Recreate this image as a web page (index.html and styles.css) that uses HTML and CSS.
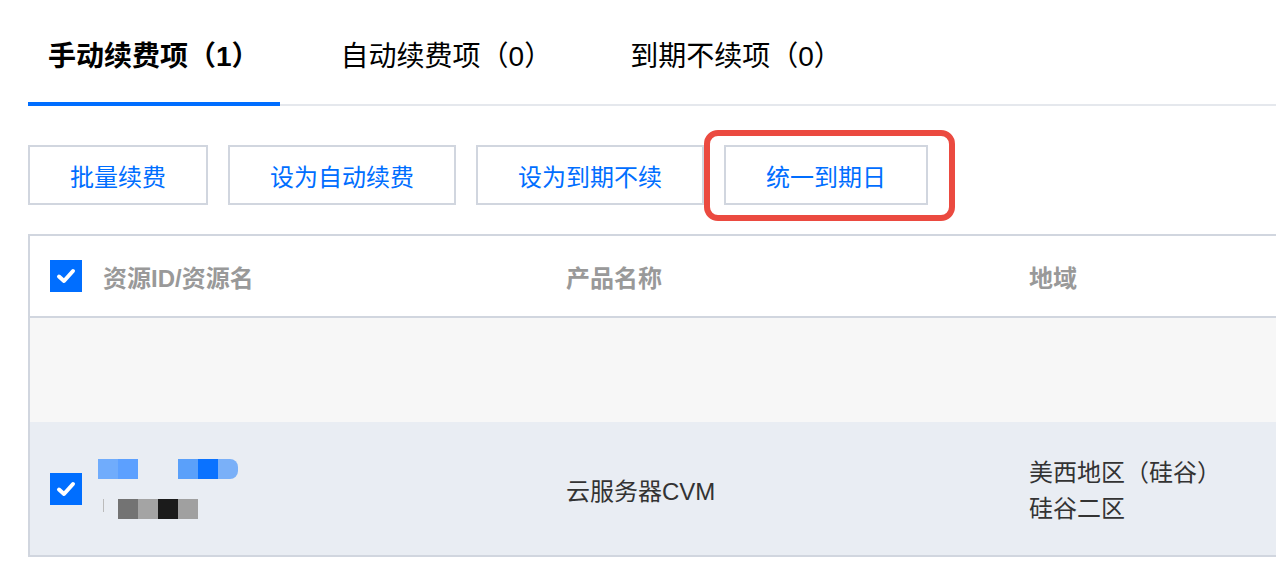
FILE: index.html
```html
<!DOCTYPE html>
<html lang="zh-CN">
<head>
<meta charset="utf-8">
<title>续费管理</title>
<link rel="stylesheet" href="styles.css">
</head>
<body>
<div class="page">
  <div class="tabs">
    <div class="tab tab-active">手动续费项（1）</div>
    <div class="tab">自动续费项（0）</div>
    <div class="tab">到期不续项（0）</div>
  </div>

  <div class="actions">
    <button class="btn">批量续费</button>
    <button class="btn">设为自动续费</button>
    <button class="btn">设为到期不续</button>
    <div class="highlight-wrap">
      <button class="btn">统一到期日</button>
      <span class="highlight"></span>
    </div>
  </div>

  <div class="table">
    <div class="row row-head">
      <div class="cell cell-first">
        <svg class="checkbox" width="32" height="32" viewBox="0 0 32 32"><rect width="32" height="32" fill="#006eff"/><path d="M9 16.5l5 4.5 9-10" fill="none" stroke="#fff" stroke-width="4" stroke-linecap="round" stroke-linejoin="round"/></svg>
        <span>资源ID/资源名</span>
      </div>
      <div class="cell">产品名称</div>
      <div class="cell">地域</div>
    </div>
    <div class="row row-empty"></div>
    <div class="row row-selected">
      <div class="cell cell-first">
        <svg class="checkbox" width="32" height="32" viewBox="0 0 32 32"><rect width="32" height="32" fill="#006eff"/><path d="M9 16.5l5 4.5 9-10" fill="none" stroke="#fff" stroke-width="4" stroke-linecap="round" stroke-linejoin="round"/></svg>
        <div class="mosaic">
          <div class="mosaic-line">
            <span class="px c1"></span><span class="px c2"></span><span class="px-gap"></span><span class="px c3"></span><span class="px c4"></span><span class="px c5 px-round"></span>
          </div>
          <div class="mosaic-line line2">
            <span class="tick"></span><span class="px g1"></span><span class="px g2"></span><span class="px g3"></span><span class="px g4"></span>
          </div>
        </div>
      </div>
      <div class="cell body-text">云服务器CVM</div>
      <div class="cell body-text region">
        <div>美西地区（硅谷）</div>
        <div>硅谷二区</div>
      </div>
    </div>
  </div>
</div>
</body>
</html>
```

FILE: styles.css
```css
* { box-sizing: border-box; }

html, body {
  margin: 0;
  padding: 0;
  background: #fff;
  overflow: hidden;
}

body {
  font-family: "Liberation Sans", "Noto Sans CJK SC", sans-serif;
  color: #333;
}

.page {
  width: 1276px;
  height: 586px;
  overflow: hidden;
}

/* Tabs */
.tabs {
  display: flex;
  margin-left: 28px;
  border-bottom: 2px solid #e5e8ed;
  gap: 38px;
}

.tab {
  height: 104px;
  padding: 43px 20px 0;
  font-size: 28px;
  line-height: 28px;
  color: #000;
  white-space: nowrap;
}

.tab-active {
  font-weight: bold;
  height: 106px;
  margin-bottom: -2px;
  margin-right: 3px;
  border-bottom: 4px solid #006eff;
}

/* Action buttons */
.actions {
  display: flex;
  gap: 20px;
  margin: 39px 0 0 28px;
}

.btn {
  height: 60px;
  padding: 0 40px;
  border: 2px solid #d1d6df;
  background: #fff;
  color: #006eff;
  font-family: inherit;
  font-size: 24px;
  line-height: 58px;
  padding-top: 2px;
  white-space: nowrap;
  cursor: pointer;
}

.highlight-wrap {
  position: relative;
  display: flex;
}

.highlight {
  position: absolute;
  left: -20px;
  top: -15px;
  right: -27px;
  bottom: -16px;
  border: 6px solid #eb4a40;
  border-radius: 14px;
  pointer-events: none;
}

/* Table */
.table {
  margin: 29px 0 0 28px;
  border: 2px solid #d1d6df;
  border-right: none;
}

.row {
  display: grid;
  grid-template-columns: 536px 463px 1fr;
}

.cell {
  display: flex;
  align-items: center;
  font-size: 24px;
}

.cell-first {
  padding-left: 20px;
  gap: 21px;
}

.checkbox {
  flex: none;
  display: block;
}

.row-head {
  height: 82px;
  border-bottom: 2px solid #d1d6df;
  color: #999;
  font-weight: bold;
}

.row-empty {
  height: 104px;
  background: #f7f7f7;
}

.row-selected {
  height: 133px;
  background: #e9edf3;
}

.body-text {
  color: #333;
  padding-top: 2px;
}

.region {
  flex-direction: column;
  align-items: flex-start;
  justify-content: center;
  line-height: 36px;
  padding-top: 4px;
}

/* Redacted resource name (mosaic) */
.mosaic {
  display: flex;
  flex-direction: column;
  gap: 20px;
  margin-left: -5px;
}

.mosaic-line {
  display: flex;
  height: 20px;
}

.px {
  width: 20px;
  height: 20px;
  display: block;
}

.px-gap { width: 40px; }
.px-round { border-radius: 0 8px 8px 0; }

.c1 { background: #70acfc; }
.c2 { background: #5ca0ff; }
.c3 { background: #5aa0fa; }
.c4 { background: #0a72ff; }
.c5 { background: #7ab0f8; }

.line2 { padding-left: 5px; }

.tick {
  width: 1px;
  height: 13px;
  background: #bbb;
  margin-right: 14px;
}

.g1 { background: #737373; }
.g2 { background: #a4a4a4; }
.g3 { background: #1b1b1b; }
.g4 { background: #a0a0a0; }
```
